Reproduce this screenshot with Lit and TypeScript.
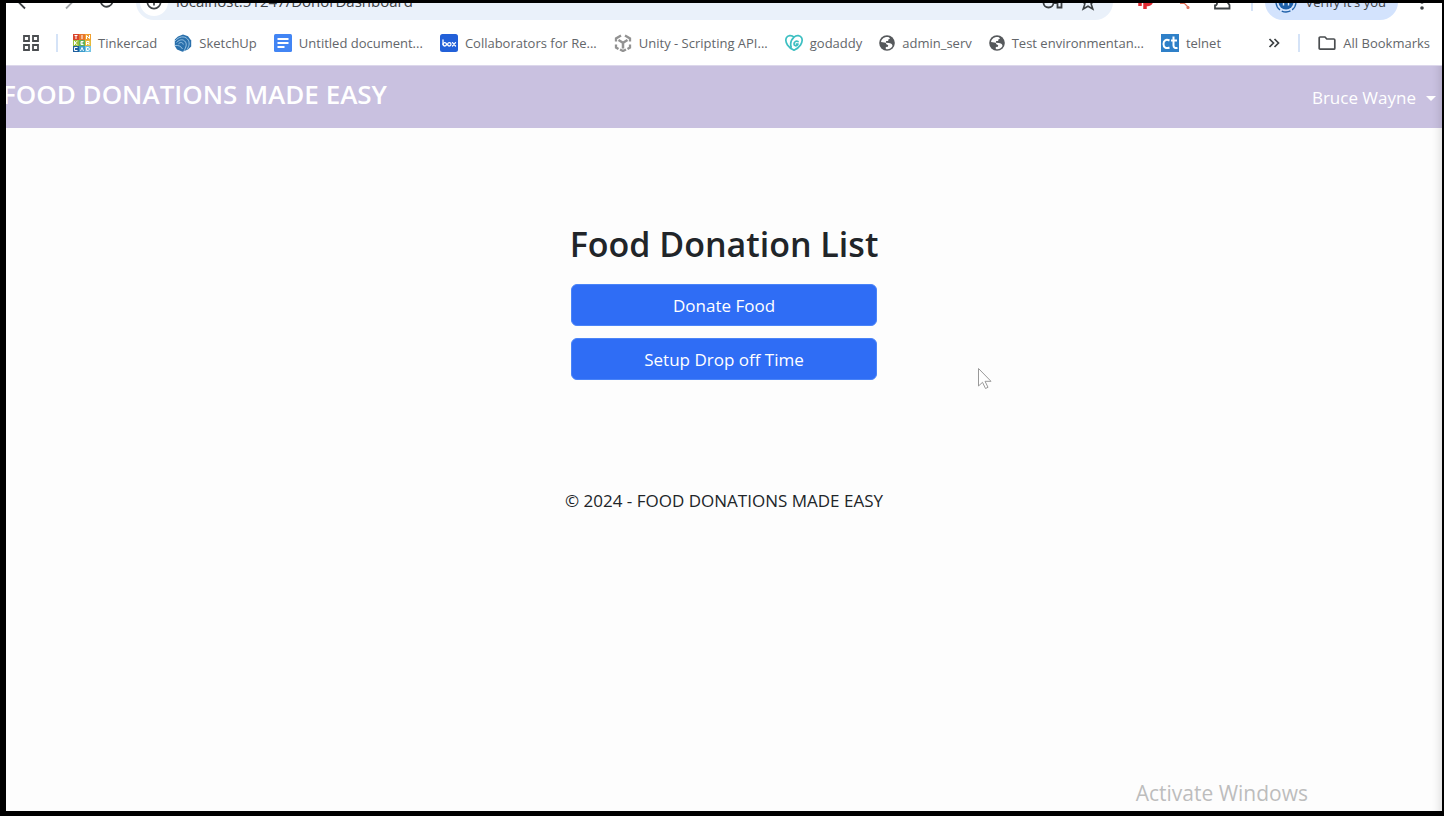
import { LitElement, html, css, svg } from "lit";
import { customElement } from "lit/decorators.js";

const icons = {
  apps: svg`<svg width="18" height="18" viewBox="0 0 18 18" fill="none" stroke="#4a4d50" stroke-width="1.800"><path d="M2 2h5v5H2zM11 2h5v5h-5zM2 11h5v5H2zM11 11h5v5h-5z"/></svg>`,
  tinkercad: svg`<svg width="18" height="18" viewBox="0 0 18 18">
    <path fill="#d8452c" d="M0 0h6v6H0z"/><path fill="#e8762d" d="M6 0h6v6H6z"/><path fill="#f0a030" d="M12 0h6v6h-6z"/>
    <path fill="#9cbf3c" d="M0 6h6v6H0z"/><path fill="#5fb05a" d="M6 6h6v6H6z"/><path fill="#e3b93a" d="M12 6h6v6h-6z"/>
    <path fill="#1f5f9e" d="M0 12h6v6H0z"/><path fill="#3c9ccc" d="M6 12h6v6H6z"/><path fill="#74c4e4" d="M12 12h6v6h-6z"/>
    <g fill="none" stroke="#fff" stroke-width="1"><path d="M1.500 1.500h3M3 1.500v3.500M9 1v4M13.500 5V1.500l3 3V1M1.500 7v4M4.500 7l-2.500 2 2.500 2M10.500 7.500h-2.500v3h2.500M8 9h2M13.500 11V7.500h2.500v2h-2M15 9.500l1.500 1.500M4.500 13.500h-3v3h3M7.500 17l1.500-3.500 1.500 3.500M13.500 13.500h2l1 1.500-1 1.500h-2z"/></g></svg>`,
  sketchup: svg`<svg width="18" height="18" viewBox="0 0 18 18"><path fill="#2a70ac" d="M.800 5.500L4 2.500 9 .500l5 1.800 3.200 4.200v6L14 15.500l-5.500 2.300L3 15.500.800 12z"/><g fill="none" stroke="#a4cbe8" stroke-width=".9"><path d="M1 7c4-4.500 9-5.500 12.500-2 2.500 3 2 7-.500 10.500M2.500 8.500c3.500-3.500 7-3.500 9-.500 1.500 2.500.500 5-1.500 9M4.500 9.800c2-2 4.300-1.500 4.800.7M1 11.500c3-.500 6 .500 7.500 3.500"/></g></svg>`,
  doc: svg`<svg width="18" height="18" viewBox="0 0 18 18"><rect width="18" height="18" rx="1.500" fill="#4285f4"/><path d="M3.500 5h11M3.500 9h11M3.500 13h7" stroke="#fff" stroke-width="1.800"/></svg>`,
  box: svg`<svg width="18" height="18" viewBox="0 0 18 18"><rect width="18" height="18" rx="2.500" fill="#2260d8"/><g fill="none" stroke="#fff" stroke-width="1.300" stroke-linecap="round"><path d="M3 6v4.500"/><circle cx="4.800" cy="10.300" r="1.700"/><circle cx="9.300" cy="10.300" r="1.700"/><path d="M12.500 8.600l3 3.400M15.500 8.600l-3 3.400"/></g></svg>`,
  unity: svg`<svg width="18" height="18" viewBox="0 0 18 18" fill="none" stroke="#929292" stroke-width="2.300"><path d="M7 1.500L2 4.500v3M11 1.500l5 3v3M2 10.500v3l2.500 1.500M16 10.500v3L13.500 15M6 15.500l3 1.500 3-1.500"/><path d="M4.500 6L9 8.700 13.500 6M9 8.700V14.500" stroke-width="2.500"/></svg>`,
  godaddy: svg`<svg width="18" height="18" viewBox="0 0 18 18" fill="none" stroke="#3dbfc2" stroke-width="1.700" stroke-linecap="round"><path d="M9 3.200C6.500.8 2.500 1.200 1.200 4.200-.3 8.500 3.500 14 9 16.200c5.500-2.200 9.300-7.700 7.800-12C15.500 1.200 11.500.8 9 3.200 6 6 5 9.500 6.200 13M13 7.500c-2-1-4 .5-4 2.500s2.500 2.500 3.800.5V10h-1.500"/></svg>`,
  globe: svg`<svg width="16" height="16" viewBox="0 0 16 16"><circle cx="8" cy="8" r="7.800" fill="#56595c"/><path fill="#fff" d="M10 2.200C6 1 2.500 3.500 2 7l4.800.8c.2 1.200.7 2.200 2.400 2.200l-.3 1.700-2.100.4v1.800c3 .8 5.700-.6 6.700-3-.2-1.600-1.200-2.600-2.600-2.700L10 8l-3-.3.100-1.700h2l.4-1.700 1.500-.6z"/></svg>`,
  folder: svg`<svg width="18" height="16" viewBox="0 0 18 16" fill="none" stroke="#4a4d50" stroke-width="1.700" stroke-linejoin="round"><path d="M1.200 13.200V3Q1.200 2 2.200 2H7l1.800 2h7Q16.800 4 16.800 5v8.200q0 1-1 1H2.200q-1 0-1-1z"/></svg>`,
  more: svg`<svg width="12" height="10" viewBox="0 0 12 10" fill="none" stroke="#3c4043" stroke-width="1.700"><path d="M1.500 1l4 4-4 4M6.500 1l4 4-4 4"/></svg>`,
  back: svg`<svg width="18" height="18" viewBox="0 0 18 18" fill="none" stroke="#3c4043" stroke-width="1.800"><path d="M16 9H3M9 2.500L2.500 9 9 15.500"/></svg>`,
  forward: svg`<svg width="18" height="18" viewBox="0 0 18 18" fill="none" stroke="#a3a6a9" stroke-width="1.800"><path d="M2 9h13M9 2.500L15.500 9 9 15.500"/></svg>`,
  reload: svg`<svg width="18" height="18" viewBox="0 0 18 18" fill="none" stroke="#3c4043" stroke-width="1.800"><path d="M14 5A6 6 0 1 0 14.500 9M14.500 1v5h-5"/></svg>`,
  info: svg`<svg width="16" height="16" viewBox="0 0 16 16" fill="none" stroke="#3c4043" stroke-width="1.700"><circle cx="8" cy="8" r="6.600"/><path d="M8 7v4.500M8 4v1.600"/></svg>`,
  key: svg`<svg width="22" height="16" viewBox="0 0 22 16" fill="none" stroke="#3c4043" stroke-width="1.800"><circle cx="6.500" cy="8.500" r="5"/><path d="M11 6h8.500v7.500H15.500V9H11"/></svg>`,
  star: svg`<svg width="16" height="18" viewBox="0 0 16 18" fill="none" stroke="#3c4043" stroke-width="1.600"><path d="M8 2l2 4.800 4.800.4-3.700 3.500 1.700 5.300L8 13.200 3.200 16l1.700-5.300L1.200 7.200 6 6.800z"/></svg>`,
  red: svg`<svg width="18" height="18" viewBox="0 0 18 18" fill="none" stroke="#e02b32" stroke-width="3.500"><path d="M5 2v11M10 16V5h3a2.800 2.800 0 0 1 0 6.500h-3"/></svg>`,
  spark: svg`<svg width="16" height="16" viewBox="0 0 16 16" fill="none" stroke="#e0705a" stroke-width="1.200"><path d="M2 2l11 11M5 9.500l4-1"/><circle cx="13" cy="13.500" r="1" fill="#e0705a"/></svg>`,
  puzzle: svg`<svg width="18" height="18" viewBox="0 0 18 18" fill="none" stroke="#3c4043" stroke-width="1.800"><path d="M2 5h4a2 2 0 0 1 5 0h4v5l1.500 2v3.500H2v-3a2 2 0 0 0 0-4z"/></svg>`,
  avatar: svg`<svg width="22" height="22" viewBox="0 0 22 22" fill="none"><circle cx="11" cy="11" r="10" stroke="#1d5fa8" stroke-width="1.300" stroke-dasharray="9 2"/><circle cx="11" cy="11" r="7.500" fill="#1d5fa8"/><path d="M8.500 7v7.500M13.500 7v7.500M8.500 11h5" stroke="#dce9f8" stroke-width="1.400"/></svg>`,
  dots: svg`<svg width="4" height="18" viewBox="0 0 4 18" fill="#3c4043"><circle cx="2" cy="3" r="1.800"/><circle cx="2" cy="9" r="1.800"/><circle cx="2" cy="15" r="1.800"/></svg>`,
  cursor: svg`<svg width="16" height="24" viewBox="0 0 16 24"><path d="M1.500 1.500v17.500l4-3.700 3 6.200 2.500-1.200-3-6h6z" fill="#fff" stroke="#999" stroke-width="1"/></svg>`,
  ct: svg`<svg width="18" height="18" viewBox="0 0 18 18"><rect width="18" height="18" fill="#2f80c8"/><g fill="none" stroke="#fff" stroke-width="2"><path d="M8.500 6.500C5 4.800 2.500 6.500 2.500 10s2.500 5 6 3.500M12.500 2.500v9q0 3 4 2.500M10 6.500h6"/></g></svg>`,
};

const bookmarks = [
  { icon: icons.tinkercad, label: "Tinkercad" },
  { icon: icons.sketchup, label: "SketchUp" },
  { icon: icons.doc, label: "Untitled document..." },
  { icon: icons.box, label: "Collaborators for Re..." },
  { icon: icons.unity, label: "Unity - Scripting API..." },
  { icon: icons.godaddy, label: "godaddy" },
  { icon: icons.globe, label: "admin_serv" },
  { icon: icons.globe, label: "Test environmentan..." },
  { icon: icons.ct, label: "telnet" },
];

@customElement("browser-bar")
export class BrowserBar extends LitElement {
  static styles = css`
    :host { display: block; flex: none; background: #fff; color: #63666a; font-size: 13px; }
    svg { display: block; flex: none; }
    button { border: 0; padding: 0; background: none; font: inherit; color: inherit; }
    .clip { display: flex; align-items: flex-end; height: 17px; overflow: hidden; }
    .tools { display: flex; align-items: center; flex: 1; height: 36px; padding: 0 18px 0 10px; color: #3c4043; font-size: 15px; }
    .nav { display: flex; gap: 23px; width: 120px; }
    .address { display: flex; align-items: center; flex: 1; height: 36px; padding: 0 17px 0 4px; gap: 8px; border-radius: 18px; background: #eaf1fa; }
    .site { display: grid; place-items: center; width: 28px; height: 28px; border-radius: 14px; background: #fff; }
    .url { flex: 1; min-width: 0; height: 28px; border: 0; padding: 0 0 2px; background: none; font: inherit; color: inherit; }
    .extras { display: flex; align-items: center; gap: 22px; padding: 0 20px 0 22px; }
    .key { margin-right: 8px; }
    .verify { display: flex; align-items: center; gap: 8px; height: 36px; padding: 0 12px 0 10px; margin: 0 22px 0 12px; border-radius: 18px; background: #d3e3fd; font-size: 13px; }
    .rule { width: 2px; height: 18px; background: #d5e3f7; }
    .marks { display: flex; align-items: center; height: 45px; padding: 0 12px 0 16px; border-bottom: 1px solid #dcd7eb; }
    .apps { margin-right: 16px; }
    .links { display: flex; align-items: center; flex: 1; gap: 17px; padding-left: 15px; min-width: 0; }
    .mark { display: flex; align-items: center; gap: 7px; color: inherit; text-decoration: none; white-space: nowrap; }
    .more { margin-right: 18px; }
    .all { margin-left: 18px; }
  `;

  render() {
    return html`
      <div class="clip">
        <div class="tools">
          <div class="nav">
            <button aria-label="Back">${icons.back}</button>
            <button aria-label="Forward">${icons.forward}</button>
            <button aria-label="Reload">${icons.reload}</button>
          </div>
          <div class="address">
            <button class="site" aria-label="Site information">${icons.info}</button>
            <input class="url" aria-label="Address" value="localhost:51247/DonorDashboard" />
            <button class="key" aria-label="Passwords">${icons.key}</button>
            <button aria-label="Bookmark this page">${icons.star}</button>
          </div>
          <div class="extras">${icons.red}${icons.spark}${icons.puzzle}</div>
          <span class="rule"></span>
          <button class="verify">${icons.avatar}Verify it's you</button>
          <button aria-label="Menu">${icons.dots}</button>
        </div>
      </div>
      <nav class="marks" aria-label="Bookmarks">
        <button class="apps" aria-label="Apps">${icons.apps}</button>
        <span class="rule"></span>
        <div class="links">
          ${bookmarks.map((b) => html`<a class="mark" href="#">${b.icon}<span>${b.label}</span></a>`)}
        </div>
        <button class="more" aria-label="More bookmarks">${icons.more}</button>
        <span class="rule"></span>
        <button class="mark all">${icons.folder}<span>All Bookmarks</span></button>
      </nav>
    `;
  }
}

@customElement("app-root")
export class AppRoot extends LitElement {
  static styles = css`
    :host { display: flex; flex-direction: column; box-sizing: border-box; height: 100vh; padding: 3px 2px 5px 6px; overflow: hidden; background: #000; color: #212529; font-family: "Open Sans", "Noto Sans", sans-serif; font-size: 17px; }
    .page { position: relative; flex: 1; min-height: 0; overflow: hidden; background: #fdfdfd; box-shadow: inset -10px 0 8px -8px #0002; }
    .header { display: flex; align-items: center; justify-content: space-between; height: 62px; padding-right: 6px; background: #c9c1e0; box-shadow: inset -10px 0 8px -8px #0002; color: #fff; }
    .brand { margin: 0 0 6px -4px; color: inherit; font-size: 26px; font-weight: 600; line-height: 36px; text-decoration: none; white-space: nowrap; }
    .user { display: flex; align-items: center; gap: 10px; border: 0; padding: 2px 0 0; background: none; color: inherit; font: inherit; line-height: 24px; }
    .caret { border: 5px solid transparent; border-top-color: #fff; border-bottom: 0; }
    .main { display: flex; flex-direction: column; align-items: center; padding-top: 92px; }
    .title { margin: 0 0 16px; font-size: 34px; font-weight: 600; line-height: 48px; white-space: nowrap; }
    .actions { display: grid; gap: 12px; width: 306px; }
    .action { height: 42px; border: 1px solid #4a84f8; border-radius: 6px; background: #2f6df5; color: #fff; font: inherit; }
    .footer { padding-top: 108px; text-align: center; line-height: 26px; }
    .notice { position: absolute; right: 134px; bottom: 4px; color: #bdbdbd; font-size: 21px; line-height: 28px; }
    .cursor { position: absolute; left: 971px; top: 301px; }
  `;

  render() {
    return html`
      <browser-bar></browser-bar>
      <div class="page">
        <header class="header">
          <a class="brand" href="#">FOOD DONATIONS MADE EASY</a>
          <button class="user" aria-haspopup="menu">Bruce Wayne<span class="caret"></span></button>
        </header>
        <main class="main">
          <h1 class="title">Food Donation List</h1>
          <div class="actions">
            <button class="action">Donate Food</button>
            <button class="action">Setup Drop off Time</button>
          </div>
        </main>
        <footer class="footer">© 2024 - FOOD DONATIONS MADE EASY</footer>
        <div class="notice">Activate Windows</div>
        <div class="cursor">${icons.cursor}</div>
      </div>
    `;
  }
}
